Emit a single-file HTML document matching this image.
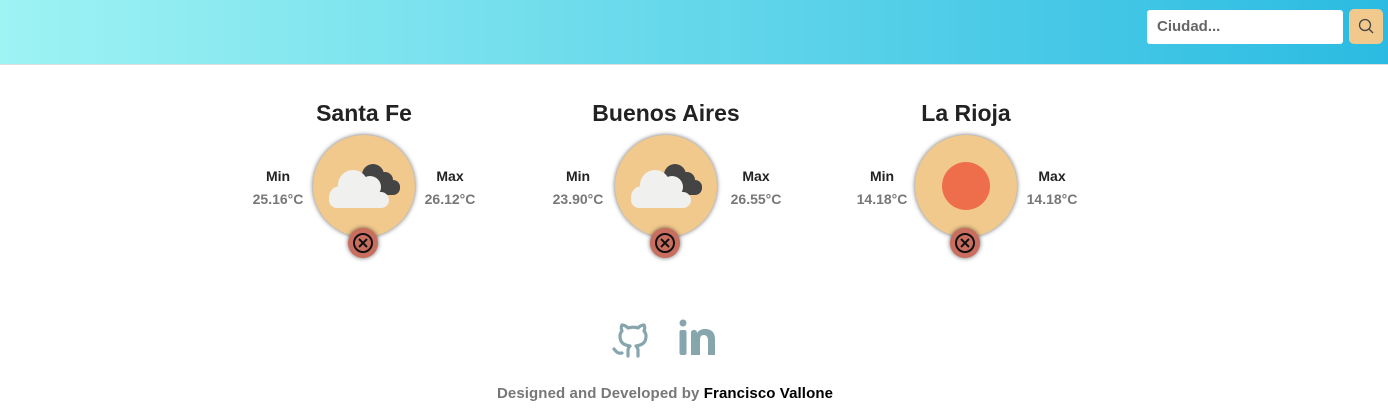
<!DOCTYPE html>
<html><head><meta charset="utf-8"><style>
body{margin:0;width:1388px;height:420px;background:#fff;font-family:"Liberation Sans",sans-serif;position:relative;overflow:hidden}
.hdr{position:absolute;left:0;top:0;width:1388px;height:64px;background:linear-gradient(90deg,#9ef3f3,#2bbbe2);border-bottom:1px solid #ddd}
.inp{position:absolute;left:1147px;top:10px;width:196px;height:34px;background:#fff;border-radius:3px;font-size:15px;font-weight:bold;color:#666;line-height:34px;padding-left:10px;box-sizing:border-box}
.btn{position:absolute;left:1349px;top:9px;width:34px;height:35px;background:#f2c98d;border-radius:5px}
.card{position:absolute;top:98px;width:240px;height:170px}
.t{position:absolute;top:2px;left:0;width:100%;text-align:center;font-size:23px;font-weight:bold;color:#222}
.c{position:absolute;left:69px;top:37px;width:102px;height:102px;border-radius:50%;background:#f2c98d;box-shadow:0 0 5px rgba(0,0,0,.6)}
.x{position:absolute;left:104px;top:130px;width:30px;height:30px;border-radius:50%;background:#c96e5f;box-shadow:0 0 5px rgba(0,0,0,.6)}
.lab{position:absolute;top:67px;font-size:14px;font-weight:bold;text-align:center;line-height:23px}
.lab b{color:#222;display:block}.lab span{color:#777}
.ft{position:absolute;top:385px;left:495px;width:340px;text-align:center;font-size:15px;font-weight:bold;color:#777;letter-spacing:0.1px;white-space:nowrap}
</style></head><body>
<div class="hdr"></div>
<div class="inp">Ciudad...</div>
<div class="btn"><svg width="34" height="35"><circle cx="16" cy="16" r="5.5" fill="none" stroke="#444" stroke-width="1.3"/><line x1="20" y1="20" x2="24" y2="24" stroke="#444" stroke-width="1.3"/></svg></div>

<div class="card" style="left:244px">
<div class="t">Santa Fe</div>
<div class="lab" style="left:4px;width:60px"><b>Min</b><span>25.16°C</span></div>
<div class="lab" style="left:176px;width:60px"><b>Max</b><span>26.12°C</span></div>
<div class="c"><svg width="102" height="102"><g fill="#444"><circle cx="60" cy="40" r="11"/><circle cx="72" cy="45" r="8"/><circle cx="80" cy="52" r="7"/><rect x="55" y="46" width="32" height="14" rx="7"/></g><g fill="#f0f0ee"><circle cx="40" cy="50" r="15"/><circle cx="57" cy="52" r="11"/><circle cx="27" cy="62" r="11"/><rect x="16" y="57" width="60" height="16" rx="8"/></g></svg></div>
<div class="x"><svg width="30" height="30"><circle cx="15" cy="15" r="9" fill="none" stroke="#111" stroke-width="2"/><path d="M11 11L19 19M19 11L11 19" stroke="#111" stroke-width="2"/></svg></div>
</div>

<div class="card" style="left:546px">
<div class="t">Buenos Aires</div>
<div class="lab" style="left:0px;width:64px"><b>Min</b><span>23.90°C</span></div>
<div class="lab" style="left:178px;width:64px"><b>Max</b><span>26.55°C</span></div>
<div class="c"><svg width="102" height="102"><g fill="#444"><circle cx="60" cy="40" r="11"/><circle cx="72" cy="45" r="8"/><circle cx="80" cy="52" r="7"/><rect x="55" y="46" width="32" height="14" rx="7"/></g><g fill="#f0f0ee"><circle cx="40" cy="50" r="15"/><circle cx="57" cy="52" r="11"/><circle cx="27" cy="62" r="11"/><rect x="16" y="57" width="60" height="16" rx="8"/></g></svg></div>
<div class="x"><svg width="30" height="30"><circle cx="15" cy="15" r="9" fill="none" stroke="#111" stroke-width="2"/><path d="M11 11L19 19M19 11L11 19" stroke="#111" stroke-width="2"/></svg></div>
</div>

<div class="card" style="left:846px">
<div class="t">La Rioja</div>
<div class="lab" style="left:4px;width:64px"><b>Min</b><span>14.18°C</span></div>
<div class="lab" style="left:174px;width:64px"><b>Max</b><span>14.18°C</span></div>
<div class="c"><svg width="102" height="102"><circle cx="51" cy="51" r="24" fill="#ee6e4b"/></svg></div>
<div class="x"><svg width="30" height="30"><circle cx="15" cy="15" r="9" fill="none" stroke="#111" stroke-width="2"/><path d="M11 11L19 19M19 11L11 19" stroke="#111" stroke-width="2"/></svg></div>
</div>

<svg style="position:absolute;left:610px;top:316px" width="40" height="42"><path d="M12 37c-5 1-6-2-8-4M18 40v-6c0-2 1-3 2-4-6-1-10-3-10-10 0-2 1-4 2-5-1-2-1-4 0-6 2 0 4 1 6 3 3-1 7-1 10 0 2-2 4-3 6-3 1 2 1 4 0 6 1 1 2 3 2 5 0 7-4 9-10 10 1 1 2 2 2 4v6" fill="none" stroke="#86a5ad" stroke-width="3.2" stroke-linecap="round" stroke-linejoin="round"/></svg>
<svg style="position:absolute;left:678px;top:318px" width="40" height="40"><circle cx="5" cy="5" r="3.5" fill="#86a5ad"/><rect x="1.5" y="12" width="7" height="25" rx="2" fill="#86a5ad"/><path d="M13 37V15c0-2 1-3 3-3s3 1 3 3c2-3 5-4 8-4 6 0 10 3 10 10v16h-7V22c0-3-2-5-4-5-3 0-4 2-4 5v15z" fill="#86a5ad"/></svg>

<div class="ft">Designed and Developed by <span style="color:#000">Francisco Vallone</span></div>
</body></html>
